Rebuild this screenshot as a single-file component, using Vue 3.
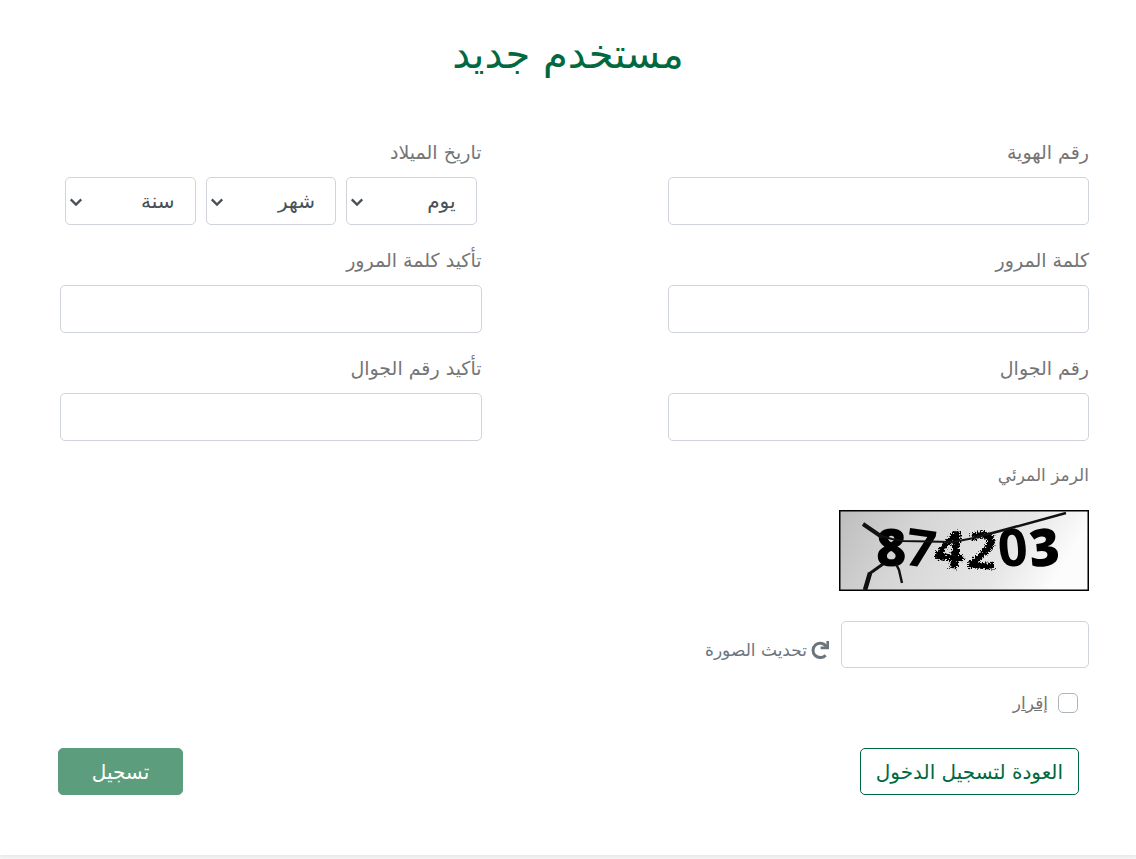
<script setup>
import { reactive } from 'vue'

const form = reactive({
  id: '', password: '', confirmPassword: '', mobile: '', confirmMobile: '',
  captcha: '', agree: false, day: '', month: '', year: '',
})

const dateParts = [
  { key: 'day', label: 'يوم' },
  { key: 'month', label: 'شهر' },
  { key: 'year', label: 'سنة' },
]
</script>

<template>
  <main class="page" dir="rtl" lang="ar">
    <form class="card" @submit.prevent>
      <h1 class="title">مستخدم جديد</h1>

      <div class="fields">
        <div class="field">
          <label for="id">رقم الهوية</label>
          <input id="id" v-model="form.id" class="control" type="text" />
        </div>
        <div class="field" role="group" aria-labelledby="birth">
          <span id="birth" class="caption">تاريخ الميلاد</span>
          <div class="dates">
            <div v-for="part in dateParts" :key="part.key" class="date">
              <select v-model="form[part.key]" class="control" :aria-label="part.label">
                <option value="">{{ part.label }}</option>
              </select>
              <svg class="chevron" viewBox="0 0 16 16" aria-hidden="true">
                <path d="M2 5l6 6 6-6" />
              </svg>
            </div>
          </div>
        </div>
        <div class="field">
          <label for="password">كلمة المرور</label>
          <input id="password" v-model="form.password" class="control" type="password" />
        </div>
        <div class="field">
          <label for="password2">تأكيد كلمة المرور</label>
          <input id="password2" v-model="form.confirmPassword" class="control" type="password" />
        </div>
        <div class="field">
          <label for="mobile">رقم الجوال</label>
          <input id="mobile" v-model="form.mobile" class="control" type="tel" />
        </div>
        <div class="field">
          <label for="mobile2">تأكيد رقم الجوال</label>
          <input id="mobile2" v-model="form.confirmMobile" class="control" type="tel" />
        </div>
      </div>

      <div class="captcha">
        <label for="captcha">الرمز المرئي</label>
        <svg class="captcha-image" viewBox="0 0 250 81" role="img" aria-label="874203">
          <defs>
            <linearGradient id="shade" x1="0" y1="0" x2="1" y2="0.2">
              <stop offset="0" stop-color="#bdbdbd" />
              <stop offset="0.35" stop-color="#d6d6d6" />
              <stop offset="0.75" stop-color="#e6e6e6" />
              <stop offset="1" stop-color="#fcfcfc" />
            </linearGradient>
            <filter id="soft"><feGaussianBlur stdDeviation="0.6" /></filter>
            <filter id="rough" x="-20%" y="-20%" width="140%" height="140%">
              <feTurbulence type="fractalNoise" baseFrequency="0.6" numOctaves="2" seed="4" />
              <feDisplacementMap in="SourceGraphic" scale="8" xChannelSelector="R" yChannelSelector="G" />
              <feGaussianBlur stdDeviation="0.7" />
            </filter>
          </defs>
          <rect x="0.75" y="0.75" width="248.5" height="79.5" fill="url(#shade)" stroke="#000" stroke-width="1.5" />
          <g class="digits">
            <g filter="url(#rough)">
              <text x="96" y="58" transform="rotate(5 112 40)">4</text>
              <text x="128" y="59" transform="rotate(4 144 40)">2</text>
            </g>
            <g filter="url(#soft)">
              <text class="heavy" x="37" y="56">8</text>
              <text x="67" y="57" transform="rotate(8 83 38)">7</text>
              <text x="159" y="56" transform="rotate(-5 173 38)">0</text>
              <text class="heavy" x="190" y="56" transform="rotate(-5 205 38)">3</text>
            </g>
          </g>
          <g fill="none" stroke="#111">
            <path d="M24 14L43 27" stroke-width="4" />
            <path d="M42 26L53 29L64 31L114 32L135 28" stroke-width="2" />
            <path d="M134 28L161 21L227 3" stroke-width="2.4" />
            <path d="M26 80L31 63" stroke-width="4.5" />
            <path d="M30 64L44 54" stroke-width="3" />
            <path d="M57 54L60 60L63 73" stroke-width="2.4" />
          </g>
        </svg>
        <div class="verify">
          <input id="captcha" v-model="form.captcha" class="control" type="text" autocomplete="off" />
          <button class="refresh" type="button">
            <svg viewBox="0 0 18 18" aria-hidden="true">
              <path d="M14.6 14.2a7.2 7.2 0 1 1 .4-9.2" fill="none" stroke="currentColor" stroke-width="3" />
              <path d="M18 0v8.2H9.6V5.6h4.2L15.4 4V0z" fill="currentColor" />
            </svg>
            <span>تحديث الصورة</span>
          </button>
        </div>
      </div>

      <div class="agree">
        <input id="agree" v-model="form.agree" type="checkbox" />
        <label for="agree">إقرار</label>
      </div>

      <div class="actions">
        <button class="btn outline" type="button">العودة لتسجيل الدخول</button>
        <button class="btn solid" type="submit">تسجيل</button>
      </div>
    </form>
  </main>
</template>

<style>
body {
  background: #f8f8f8;
}
</style>

<style scoped>
.page,
.page * {
  box-sizing: border-box;
}
.page {
  padding-bottom: 4px;
  font-family: "DejaVu Sans", "Noto Sans", sans-serif;
  font-size: 19px;
  line-height: 24px;
  color: #757575;
}
.card {
  padding: 30px 47px 60px 60px;
  background: #fff;
  box-shadow: 0 2px 4px rgba(0, 0, 0, 0.08);
}
input,
select,
button {
  margin: 0;
  font: inherit;
}
.title {
  margin: 0 0 62px -13px;
  font-size: 40px;
  font-weight: 400;
  line-height: 48px;
  text-align: center;
  color: #006940;
}
.fields {
  display: grid;
  grid-template-columns: 1fr 1fr;
  gap: 23px 186px;
}
.field label,
.caption,
.captcha label {
  display: block;
  margin-bottom: 13px;
}
.control {
  display: block;
  width: 100%;
  height: 48px;
  padding: 8px 12px;
  border: 1px solid #ced4da;
  border-radius: 5px;
  background: #fff;
  color: #495057;
  outline: none;
}
.dates {
  display: grid;
  grid-template-columns: repeat(3, 1fr);
  gap: 10px;
  padding: 0 5px;
}
.date {
  position: relative;
}
.date .control {
  padding: 0 20px;
  font-size: 20px;
  appearance: none;
}
.chevron {
  position: absolute;
  left: 4px;
  top: 18px;
  width: 14px;
  height: 14px;
  fill: none;
  stroke: #495057;
  stroke-width: 2.6;
  pointer-events: none;
}
.captcha {
  margin-top: 22px;
}
.captcha label {
  margin-bottom: 23px;
  font-size: 17px;
}
.captcha-image {
  display: block;
  width: 250px;
  height: 81px;
  direction: ltr;
}
.digits {
  font-family: "Open Sans", sans-serif;
  font-size: 52px;
  font-weight: 700;
  fill: #050505;
}
.heavy {
  font-weight: 800;
}
.verify {
  display: flex;
  align-items: center;
  gap: 12px;
  margin-top: 30px;
}
.verify .control {
  width: 248px;
  height: 47px;
}
.refresh {
  display: flex;
  align-items: center;
  gap: 4px;
  padding: 10px 0 0;
  border: 0;
  background: none;
  color: #6c757d;
  font-size: 17px;
}
.refresh svg {
  width: 18px;
  height: 18px;
}
.agree {
  display: flex;
  align-items: center;
  gap: 10px;
  margin-top: 23px;
  padding-right: 11px;
}
.agree input {
  width: 20px;
  height: 20px;
  border: 1px solid #adb5bd;
  border-radius: 5px;
  background: #fff;
  appearance: none;
}
.agree input:checked {
  background: #006940;
}
.agree label {
  font-size: 17px;
  text-decoration: underline;
}
.actions {
  display: flex;
  justify-content: space-between;
  margin: 33px 10px 0 -2px;
}
.btn {
  height: 47px;
  padding: 0 15px;
  border: 1px solid #006940;
  border-radius: 5px;
  font-size: 20px;
  white-space: nowrap;
}
.outline {
  min-width: 219px;
  background: #fff;
  color: #006940;
}
.solid {
  min-width: 125px;
  border-color: #5b9d7d;
  background: #5b9d7d;
  color: #fff;
}
</style>
